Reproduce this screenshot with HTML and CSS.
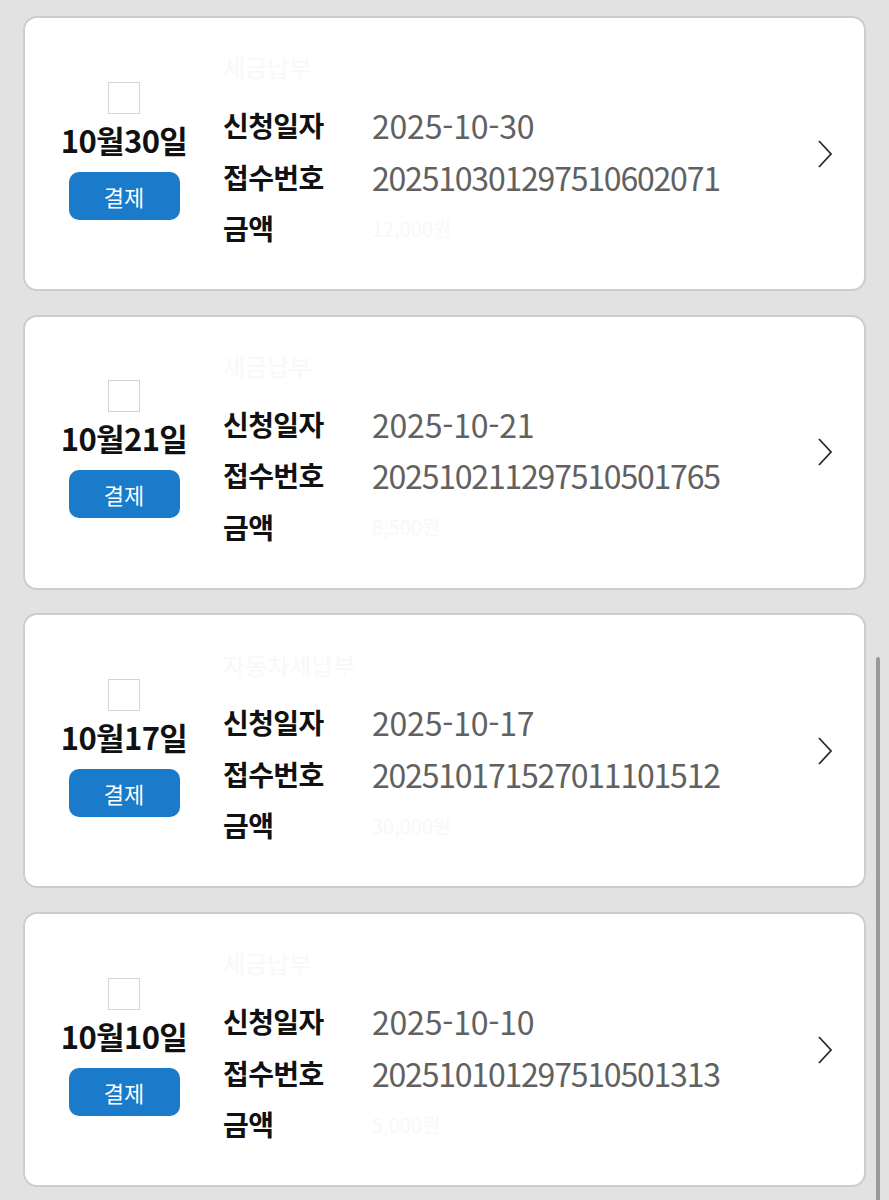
FILE: index.html
```html
<!DOCTYPE html>
<html lang="ko">
<head>
    <meta charset="UTF-8">
    <meta name="viewport" content="width=device-width, initial-scale=1.0">
    <title>결제 내역</title>
    <link rel="stylesheet" href="styles.css">
</head>
<body>
    <div class="list">
        <div class="card">
            <div class="side">
                <span class="check"></span>
                <div class="date">10월30일</div>
                <button class="pay">결제</button>
            </div>
            <div class="info">
                <div class="title">세금납부</div>
                <div class="row"><span class="label">신청일자</span><span class="value day">2025-10-30</span></div>
                <div class="row"><span class="label">접수번호</span><span class="value">20251030129751060207<span class="last">1</span></span></div>
                <div class="row"><span class="label">금액</span><span class="value faint">12,000원</span></div>
            </div>
            <svg class="arrow" width="16" height="30" viewBox="0 0 16 30"><path d="M2 2 L14 15 L2 28" fill="none" stroke="#2a2a2a" stroke-width="1.8"/></svg>
        </div>

        <div class="card">
            <div class="side">
                <span class="check"></span>
                <div class="date">10월21일</div>
                <button class="pay">결제</button>
            </div>
            <div class="info">
                <div class="title">세금납부</div>
                <div class="row"><span class="label">신청일자</span><span class="value day">2025-10-21</span></div>
                <div class="row"><span class="label">접수번호</span><span class="value">20251021129751050176<span class="last">5</span></span></div>
                <div class="row"><span class="label">금액</span><span class="value faint">8,500원</span></div>
            </div>
            <svg class="arrow" width="16" height="30" viewBox="0 0 16 30"><path d="M2 2 L14 15 L2 28" fill="none" stroke="#2a2a2a" stroke-width="1.8"/></svg>
        </div>

        <div class="card">
            <div class="side">
                <span class="check"></span>
                <div class="date">10월17일</div>
                <button class="pay">결제</button>
            </div>
            <div class="info">
                <div class="title">자동차세납부</div>
                <div class="row"><span class="label">신청일자</span><span class="value day">2025-10-17</span></div>
                <div class="row"><span class="label">접수번호</span><span class="value">20251017152701110151<span class="last">2</span></span></div>
                <div class="row"><span class="label">금액</span><span class="value faint">30,000원</span></div>
            </div>
            <svg class="arrow" width="16" height="30" viewBox="0 0 16 30"><path d="M2 2 L14 15 L2 28" fill="none" stroke="#2a2a2a" stroke-width="1.8"/></svg>
        </div>

        <div class="card">
            <div class="side">
                <span class="check"></span>
                <div class="date">10월10일</div>
                <button class="pay">결제</button>
            </div>
            <div class="info">
                <div class="title">세금납부</div>
                <div class="row"><span class="label">신청일자</span><span class="value day">2025-10-10</span></div>
                <div class="row"><span class="label">접수번호</span><span class="value">20251010129751050131<span class="last">3</span></span></div>
                <div class="row"><span class="label">금액</span><span class="value faint">5,000원</span></div>
            </div>
            <svg class="arrow" width="16" height="30" viewBox="0 0 16 30"><path d="M2 2 L14 15 L2 28" fill="none" stroke="#2a2a2a" stroke-width="1.8"/></svg>
        </div>
    </div>
    <div class="scrollbar"></div>
</body>
</html>
```

FILE: styles.css
```css
body {
    margin: 0;
    padding: 0;
    background-color: #e2e2e2;
    font-family: "Noto Sans CJK KR", "Noto Sans", sans-serif;
    overflow: hidden;
}
.list {
    display: flex;
    flex-direction: column;
    gap: 23.7px;
    padding: 16px 23px;
}
.card {
    display: flex;
    align-items: center;
    height: 275px;
    box-sizing: border-box;
    background-color: #fff;
    border: 2px solid #cdcdcd;
    border-radius: 14px;
}
.side {
    width: 198px;
    display: flex;
    flex-direction: column;
    align-items: center;
    padding-bottom: 6px;
}
.check {
    width: 30px;
    height: 30px;
    border: 1px solid #d4d4d4;
    margin-bottom: 7px;
}
.date {
    font-size: 31px;
    font-weight: bold;
    color: #111;
    line-height: 38px;
    letter-spacing: -0.6px;
}
.pay {
    margin-top: 13px;
    width: 111px;
    height: 48px;
    border: none;
    border-radius: 10px;
    background-color: #1a7bcb;
    color: #fff;
    font-family: inherit;
    font-size: 22px;
}
.info {
    flex: 1;
    padding-bottom: 4px;
}
.title {
    height: 50px;
    font-size: 24px;
    color: #f8f8f8;
    line-height: 36px;
}
.row {
    display: flex;
    height: 51.5px;
    align-items: center;
}
.label {
    width: 149px;
    font-size: 28px;
    font-weight: bold;
    color: #111;
    letter-spacing: -0.6px;
}
.value {
    font-size: 32px;
    color: #616161;
    letter-spacing: -1.2px;
}
.value.day {
    letter-spacing: -0.2px;
}
.value.faint {
    color: #f8f8f8;
    font-size: 20px;
    letter-spacing: 0;
}
.arrow {
    margin-right: 31px;
}
.scrollbar {
    position: absolute;
    left: 876px;
    top: 657px;
    width: 4px;
    height: 560px;
    border-radius: 2px;
    background-color: #9a9a9a;
}
```
